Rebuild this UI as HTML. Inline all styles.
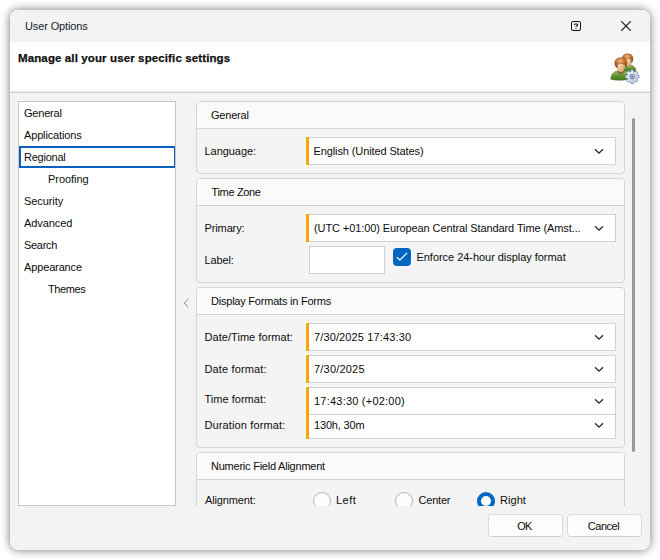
<!DOCTYPE html>
<html lang="en">
<head>
<meta charset="utf-8">
<title>User Options</title>
<style>
html,body{margin:0;padding:0;}
body{width:660px;height:560px;background:#fff;overflow:hidden;position:relative;
  font-family:"Liberation Sans",sans-serif;font-size:11px;color:#0c0c0c;}
*{box-sizing:border-box;}
i{font-style:normal;}
.abs{position:absolute;}
#win{position:absolute;left:10px;top:10px;width:640px;height:540px;border-radius:8px;background:#f3f3f3;
  box-shadow:0 0 10px rgba(0,0,0,.55);overflow:hidden;}
#title{position:absolute;left:0;top:0;width:640px;height:32px;background:#f3f3f3;}
#title .t{position:absolute;left:15px;top:9px;line-height:14px;color:#1a1a2e;}
#hdr{position:absolute;left:0;top:32px;width:640px;height:51px;background:#fff;border-bottom:1px solid #cdcdcd;box-shadow:inset 0 -1px 0 #f0f0f0;}
#hdr .t{position:absolute;left:8px;top:9px;line-height:14px;font-weight:700;color:#111;}
#nav{position:absolute;left:8px;top:91px;width:158px;height:405px;background:#fff;border:1px solid #c6c6c6;}
#nav div{position:absolute;left:5px;height:14px;line-height:14px;white-space:nowrap;}
#nav div.sub{left:29px;}
#nav .sel{position:absolute;left:0;top:44px;width:156px;height:22px;border:2px solid #0b60c0;border-right-width:1px;}
#split{position:absolute;left:172px;top:287px;}
.grp{position:absolute;left:186px;width:429px;border:1px solid #d4d4d4;border-radius:4px;background:#f4f4f4;overflow:hidden;}
.grp .gh{position:absolute;left:0;top:0;width:100%;height:27px;background:#fafafa;border-bottom:1px solid #d4d4d4;}
.grp .gh span{position:absolute;left:14px;top:6px;line-height:14px;white-space:nowrap;}
.lbl{position:absolute;left:7.500px;line-height:14px;height:14px;white-space:nowrap;}
.dd{position:absolute;left:112px;width:307px;height:28px;background:#fff;border:1px solid #d2d2d2;border-left:0;}
.dd::before{content:"";position:absolute;left:-3px;top:-1px;bottom:-1px;width:3px;background:#ffa500;}
.dd span{position:absolute;left:5px;top:6px;line-height:14px;white-space:nowrap;}
.dd svg{position:absolute;right:11px;top:10px;}
#scroll{position:absolute;left:622px;top:108px;width:3px;height:334px;background:#999;border-radius:2px;}
#clipper{position:absolute;left:0;top:82px;width:640px;height:414px;overflow:hidden;}
.btn{position:absolute;top:504px;width:75px;height:23px;background:#fdfdfd;border:1px solid #dadada;border-bottom-color:#cfcfcf;border-radius:4px;text-align:center;line-height:22px;padding-right:2px;}
.radio{position:absolute;width:18px;height:18px;border-radius:50%;background:#fefefe;border:1px solid #b2b2b2;}
.radio.on{border:4px solid #0067c0;background:#fff;}
</style>
</head>
<body>
<div id="win">
  <div id="title">
    <span class="t"><i style="letter-spacing:-0.12px">User Options</i></span>
    <svg class="abs" style="left:561px;top:11px" width="10" height="10" viewBox="0 0 10 10"><rect x=".5" y=".5" width="9" height="9" rx="1.500" fill="none" stroke="#111" stroke-width="1"/><path d="M3.500 4V3h3v2H5v1" fill="none" stroke="#111" stroke-width="1"/><rect x="4.500" y="7" width="1" height="1" fill="#111"/></svg>
    <svg class="abs" style="left:611px;top:11px" width="10" height="10" viewBox="0 0 10 10"><path d="M.3.3l9.400 9.400M9.700.3L.3 9.700" stroke="#111" stroke-width="1.150" fill="none"/></svg>
  </div>
  <div id="hdr">
    <span class="t"><i style="letter-spacing:0.12px;font-size:11.500px;-webkit-text-stroke:0.25px #111">Manage all your user specific settings</i></span>
    <svg class="abs" style="left:594px;top:4px" width="40" height="40" viewBox="0 0 40 40">
      <defs>
        <linearGradient id="gg" x1="0" y1="0" x2="0" y2="1"><stop offset="0" stop-color="#9cc466"/><stop offset=".45" stop-color="#6a9a38"/><stop offset="1" stop-color="#3f721d"/></linearGradient>
        <radialGradient id="hh" cx=".45" cy=".3" r=".8"><stop offset="0" stop-color="#eeb682"/><stop offset=".5" stop-color="#bd6a2b"/><stop offset="1" stop-color="#7d3d14"/></radialGradient>
        <linearGradient id="ff" x1="0" y1="0" x2="1" y2="1"><stop offset="0" stop-color="#fde3bd"/><stop offset="1" stop-color="#e0a264"/></linearGradient>
        <linearGradient id="gr" x1="0" y1="0" x2="1" y2="1"><stop offset="0" stop-color="#ffffff"/><stop offset="1" stop-color="#b9c6e2"/></linearGradient>
      </defs>
      <path d="M19.800 25.500C19.800 21.500 22.500 19 25.800 19S32 21.500 32 25.500Z" fill="url(#gg)" stroke="#4a7a26" stroke-width=".5"/>
      <ellipse cx="24.600" cy="15.800" rx="2.700" ry="4.200" fill="url(#ff)" stroke="#c28a55" stroke-width=".5"/>
      <path d="M18.300 12.500C18.300 9.500 20.500 7.800 23.600 7.800S29 9.500 29 12.500C29 14.500 28.300 16 27.600 16.800C27.600 14 26.800 12.300 24.600 12.300S21.600 13.500 21.300 15.500C19.800 15.500 18.300 14.500 18.300 12.500Z" fill="url(#hh)" stroke="#8a4a1e" stroke-width=".5"/>
      <path d="M6.800 33.200C6.800 27.500 11 24.600 15.800 24.600S24.300 27.500 24.300 33.200C20 34.600 11 34.600 6.800 33.200Z" fill="url(#gg)" stroke="#4a7a26" stroke-width=".5"/>
      <path d="M13.500 26.200L16.800 28.500L20.200 26.200L19 24.500H14.600Z" fill="#6b4a1e" opacity=".75"/>
      <ellipse cx="16.800" cy="21.300" rx="3.300" ry="5" fill="url(#ff)" stroke="#c28a55" stroke-width=".5"/>
      <path d="M10.800 17C10.800 13.600 13.300 11.800 16.800 11.800S22.900 13.600 22.900 17C22.900 19.300 22.300 20.600 21.300 21.500C21 19 20 17.300 16.800 17.300S13 19.300 13.300 21.800C11.600 21 10.800 19.300 10.800 17Z" fill="url(#hh)" stroke="#8a4a1e" stroke-width=".5"/>
      <path d="M26.750 26.020 L26.830 23.940 L29.570 23.940 L29.650 26.020 L30.490 26.370 L32.010 24.950 L33.950 26.890 L32.530 28.410 L32.880 29.250 L34.960 29.330 L34.960 32.070 L32.880 32.150 L32.530 32.990 L33.950 34.510 L32.010 36.450 L30.490 35.030 L29.650 35.380 L29.570 37.460 L26.830 37.460 L26.750 35.380 L25.910 35.030 L24.390 36.450 L22.450 34.510 L23.870 32.990 L23.520 32.150 L21.440 32.070 L21.440 29.330 L23.520 29.250 L23.870 28.410 L22.450 26.890 L24.390 24.950 L25.910 26.370Z" fill="url(#gr)" stroke="#7787b3" stroke-width=".8" stroke-linejoin="round"/>
      <circle cx="28.200" cy="30.700" r="2.400" fill="#cfd7ec" stroke="#6777a8" stroke-width="1"/>
      <circle cx="28.200" cy="30.700" r="1" fill="#4a5c94"/>
    </svg>
  </div>
  <div id="clipper">
  <div style="position:absolute;left:0;top:-82px;width:640px;height:600px;">
    <div id="nav">
      <div style="top:4px"><i style="letter-spacing:-0.21px">General</i></div>
      <div style="top:26px"><i style="letter-spacing:-0.15px">Applications</i></div>
      <span class="sel"></span>
      <div style="top:48px"><i style="letter-spacing:-0.23px">Regional</i></div>
      <div class="sub" style="top:70px"><i style="letter-spacing:-0.04px">Proofing</i></div>
      <div style="top:92px"><i style="letter-spacing:-0.08px">Security</i></div>
      <div style="top:114px"><i style="letter-spacing:-0.07px">Advanced</i></div>
      <div style="top:136px"><i style="letter-spacing:-0.31px">Search</i></div>
      <div style="top:158px"><i style="letter-spacing:-0.14px">Appearance</i></div>
      <div class="sub" style="top:180px"><i style="letter-spacing:-0.39px">Themes</i></div>
    </div>
    <svg id="split" width="8" height="12" viewBox="0 0 8 12"><path d="M6.300 1.900L2.100 6L6.300 10.100" fill="none" stroke="#8c8c8c" stroke-width="1"/></svg>

    <div class="grp" style="top:91px;height:73px;">
      <div class="gh"><span><i style="letter-spacing:-0.21px">General</i></span></div>
      <span class="lbl" style="top:42px"><i style="letter-spacing:-0.05px">Language:</i></span>
      <div class="dd" style="top:35px"><span style="left:4.500px"><i style="letter-spacing:-0.11px">English (United States)</i></span><svg width="10" height="7" viewBox="0 0 10 7"><path d="M1 1.200L5 5.100L9 1.200" fill="none" stroke="#222" stroke-width="1.200"/></svg></div>
    </div>

    <div class="grp" style="top:168px;height:105px;">
      <div class="gh"><span style="left:14.500px"><i style="letter-spacing:-0.34px">Time Zone</i></span></div>
      <span class="lbl" style="top:42px"><i style="letter-spacing:-0.12px">Primary:</i></span>
      <div class="dd" style="top:35px"><span><i style="letter-spacing:-0.10px">(UTC +01:00) European Central Standard Time (Amst...</i></span><svg width="10" height="7" viewBox="0 0 10 7"><path d="M1 1.200L5 5.100L9 1.200" fill="none" stroke="#222" stroke-width="1.200"/></svg></div>
      <span class="lbl" style="top:74px"><i style="letter-spacing:-0.12px">Label:</i></span>
      <div class="abs" style="left:112px;top:67px;width:76px;height:28px;background:#fff;border:1px solid #cfcfcf;"></div>
      <div class="abs" style="left:196px;top:69px;width:18px;height:18px;background:#0067c0;border-radius:4px;"><svg class="abs" style="left:0;top:0" width="18" height="18" viewBox="0 0 18 18"><path d="M3.800 9.200L6.900 12L14.100 5" fill="none" stroke="#fff" stroke-width="1.150"/></svg></div>
      <span class="lbl" style="left:219.500px;top:71px"><i style="letter-spacing:-0.04px">Enforce 24-hour display format</i></span>
    </div>

    <div class="grp" style="top:277px;height:161px;">
      <div class="gh"><span><i style="letter-spacing:-0.22px">Display Formats in Forms</i></span></div>
      <span class="lbl" style="top:42px"><i style="letter-spacing:0.05px">Date/Time format:</i></span>
      <div class="dd" style="top:35px"><span><i style="letter-spacing:0.13px">7/30/2025 17:43:30</i></span><svg width="10" height="7" viewBox="0 0 10 7"><path d="M1 1.200L5 5.100L9 1.200" fill="none" stroke="#222" stroke-width="1.200"/></svg></div>
      <span class="lbl" style="top:74px"><i style="letter-spacing:0.14px">Date format:</i></span>
      <div class="dd" style="top:67px"><span><i style="letter-spacing:0.20px">7/30/2025</i></span><svg width="10" height="7" viewBox="0 0 10 7"><path d="M1 1.200L5 5.100L9 1.200" fill="none" stroke="#222" stroke-width="1.200"/></svg></div>
      <span class="lbl" style="top:104px"><i style="letter-spacing:0.02px">Time format:</i></span>
      <div class="dd" style="top:99px"><span><i style="letter-spacing:0.22px">17:43:30 (+02:00)</i></span><svg width="10" height="7" viewBox="0 0 10 7"><path d="M1 1.200L5 5.100L9 1.200" fill="none" stroke="#222" stroke-width="1.200"/></svg></div>
      <span class="lbl" style="top:130px"><i style="letter-spacing:0.13px">Duration format:</i></span>
      <div class="dd" style="top:126px;height:25px"><span style="top:3px"><i style="letter-spacing:-0.17px">130h, 30m</i></span><svg style="top:6.500px" width="10" height="7" viewBox="0 0 10 7"><path d="M1 1.200L5 5.100L9 1.200" fill="none" stroke="#222" stroke-width="1.200"/></svg></div>
    </div>

    <div class="grp" style="top:442px;height:100px;">
      <div class="gh"><span><i style="letter-spacing:-0.23px">Numeric Field Alignment</i></span></div>
      <span class="lbl" style="left:8px;top:40px"><i style="letter-spacing:-0.13px">Alignment:</i></span>
      <span class="radio" style="left:116px;top:39px"></span><span class="lbl" style="left:139px;top:40px"><i style="letter-spacing:0.45px">Left</i></span>
      <span class="radio" style="left:198px;top:39px"></span><span class="lbl" style="left:221.500px;top:40px"><i style="letter-spacing:-0.20px">Center</i></span>
      <span class="radio on" style="left:280px;top:39px"></span><span class="lbl" style="left:303px;top:40px"><i style="letter-spacing:0.05px">Right</i></span>
    </div>
    <div id="scroll"></div>
  </div>
  </div>
  <div class="btn" style="left:478px"><i style="letter-spacing:-0.80px">OK</i></div>
  <div class="btn" style="left:557px"><i style="letter-spacing:-0.46px">Cancel</i></div>
</div>
</body>
</html>
